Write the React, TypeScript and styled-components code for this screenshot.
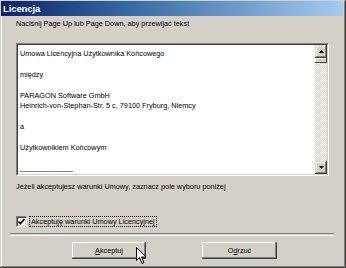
import React from "react";
import styled, { createGlobalStyle } from "styled-components";

const GlobalStyle = createGlobalStyle`
  html, body { margin: 0; padding: 0; background: #d4d0c8; }
  body { font-family: "Liberation Sans", Arial, sans-serif; }
`;

const Window = styled.div`
  position: relative;
  box-sizing: border-box;
  width: 346px;
  height: 268px;
  background: #d4d0c8;
  padding: 1px 3px 3px 1px;
  display: flex;
  flex-direction: column;
  box-shadow: inset -1px -1px #404040, inset 1px 1px #d4d0c8,
    inset -2px -2px #808080, inset 2px 2px #ffffff;
  overflow: hidden;
`;

const TitleBar = styled.div`
  height: 15px;
  flex: none;
  display: flex;
  align-items: center;
  padding-left: 2px;
  background: linear-gradient(to right, #0a246a, #3a6ea5 40%, #a6caf0);
`;

const Title = styled.span`
  color: #ffffff;
  font-weight: bold;
  font-size: 9.5px;
  letter-spacing: -0.1px;
`;

const Body = styled.div`
  flex: 1;
  display: flex;
  flex-direction: column;
  padding: 0 0 0 15px;
  font-size: 7.3px;
  color: #000;
`;

const Text = styled.div<{ $mt: number }>`
  margin-top: ${(p) => p.$mt}px;
  line-height: 10px;
  height: 10px;
  white-space: nowrap;
`;

const LicenseBox = styled.div`
  margin-top: 14px;
  width: 313px;
  height: 133px;
  box-sizing: border-box;
  display: flex;
  background: #fff;
  border-top: 1px solid #808080;
  border-left: 1px solid #808080;
  border-right: 1px solid #ffffff;
  border-bottom: 1px solid #ffffff;
`;

const LicenseInner = styled.div`
  flex: 1;
  display: flex;
  border-top: 1px solid #404040;
  border-left: 1px solid #404040;
  border-right: 1px solid #d4d0c8;
  border-bottom: 1px solid #d4d0c8;
`;

const LicenseText = styled.div`
  flex: 1;
  padding: 4px 0 0 2px;
  line-height: 10.4px;
  white-space: pre;
`;

const ScrollBar = styled.div`
  width: 12px;
  display: flex;
  flex-direction: column;
`;

const ScrollButton = styled.div`
  box-sizing: border-box;
  height: 13px;
  background: #d4d0c8;
  display: flex;
  align-items: center;
  justify-content: center;
  box-shadow: inset -1px -1px #404040, inset 1px 1px #d4d0c8,
    inset -2px -2px #808080, inset 2px 2px #ffffff;
`;

const Thumb = styled(ScrollButton)`
  height: 5px;
  box-shadow: inset -1px -1px #404040, inset 1px 1px #ffffff;
`;

const Track = styled.div`
  flex: 1;
  background-color: #ffffff;
  background-image: conic-gradient(#d4d0c8 25%, transparent 0 50%, #d4d0c8 0 75%, transparent 0);
  background-size: 2px 2px;
`;

const CheckRow = styled.div`
  margin-top: 24px;
  display: flex;
  align-items: center;
  height: 11px;
`;

const CheckBox = styled.div`
  box-sizing: border-box;
  width: 11px;
  height: 11px;
  background: #fff;
  border-top: 1px solid #808080;
  border-left: 1px solid #808080;
  border-right: 1px solid #ffffff;
  border-bottom: 1px solid #ffffff;
  box-shadow: inset 1px 1px #404040, inset -1px -1px #d4d0c8;
  display: flex;
  align-items: center;
  justify-content: center;
`;

const FocusLabel = styled.span`
  margin-left: 2px;
  padding: 0 1px;
  border: 1px dotted #000;
  line-height: 9px;
  height: 9px;
`;

const Separator = styled.div`
  margin: 6px 0 0 -6px;
  width: 324px;
  height: 1px;
  border-top: 1px solid #808080;
  border-bottom: 1px solid #ffffff;
`;

const ButtonRow = styled.div`
  margin-top: 6px;
  display: flex;
  padding-left: 56px;
  gap: 56px;
`;

const Button = styled.div<{ $w: number }>`
  box-sizing: border-box;
  width: ${(p) => p.$w}px;
  height: 17px;
  display: flex;
  align-items: center;
  justify-content: center;
  background: #d4d0c8;
  box-shadow: inset -1px -1px #404040, inset 1px 1px #ffffff,
    inset -2px -2px #808080, inset 2px 2px #d4d0c8;
  font-size: 7.3px;
`;

const Key = styled.span`
  text-decoration: underline;
`;

const Cursor = styled.svg`
  position: absolute;
  left: 136px;
  top: 247px;
`;

const licenseLines = `Umowa Licencyjna Użytkownika Końcowego

między

PARAGON Software GmbH
Heinrich-von-Stephan-Str. 5 c, 79100 Fryburg, Niemcy

a

Użytkownikiem Końcowym

_____________`;

export default function App() {
  return (
    <>
      <GlobalStyle />
      <Window>
        <TitleBar>
          <Title>Licencja</Title>
        </TitleBar>
        <Body>
          <Text $mt={3}>Naciśnij Page Up lub Page Down, aby przewijać tekst</Text>
          <LicenseBox>
            <LicenseInner>
              <LicenseText>{licenseLines}</LicenseText>
              <ScrollBar>
                <ScrollButton>
                  <svg width="5" height="3" viewBox="0 0 5 3">
                    <path d="M2.5 0 L5 3 L0 3 Z" fill="#000" />
                  </svg>
                </ScrollButton>
                <Thumb />
                <Track />
                <ScrollButton>
                  <svg width="5" height="3" viewBox="0 0 5 3">
                    <path d="M0 0 L5 0 L2.5 3 Z" fill="#000" />
                  </svg>
                </ScrollButton>
              </ScrollBar>
            </LicenseInner>
          </LicenseBox>
          <Text $mt={6}>Jeżeli akceptujesz warunki Umowy, zaznacz pole wyboru poniżej</Text>
          <CheckRow>
            <CheckBox>
              <svg width="7" height="7" viewBox="0 0 7 7">
                <path d="M0.5 3.5 L2.5 5.5 L6.5 1" stroke="#000" strokeWidth="1.6" fill="none" />
              </svg>
            </CheckBox>
            <FocusLabel>Akceptuję warunki Umowy Licencyjnej</FocusLabel>
          </CheckRow>
          <Separator />
          <ButtonRow>
            <Button $w={74}>
              <span><Key>A</Key>kceptuj</span>
            </Button>
            <Button $w={75}>
              <span>O<Key>d</Key>rzuć</span>
            </Button>
          </ButtonRow>
        </Body>
        <Cursor width="12" height="18" viewBox="0 0 12 18">
          <path
            d="M0.5 0.5 L0.5 13.5 L3.5 10.5 L6 16.5 L8 15.5 L5.5 10 L10 10 Z"
            fill="#fff"
            stroke="#000"
            strokeWidth="1"
            strokeLinejoin="miter"
          />
        </Cursor>
      </Window>
    </>
  );
}
